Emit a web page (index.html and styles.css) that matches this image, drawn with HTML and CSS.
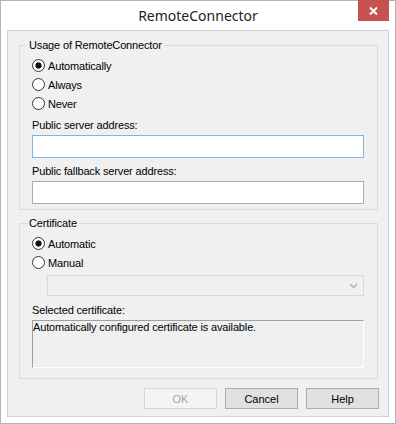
FILE: index.html
```html
<!DOCTYPE html>
<html lang="en">
<head>
  <meta charset="UTF-8" />
  <title>RemoteConnector</title>
  <link rel="stylesheet" href="styles.css">
</head>
<body>

  <div class="window">
    <div class="titlebar">
      <span></span>
      <div class="title">RemoteConnector</div>
      <button class="close">
        <svg width="9" height="8" viewBox="0 0 9 8"><path d="M1 0.5 L8 7.5 M8 0.5 L1 7.5" stroke="#fff" stroke-width="2" fill="none"/></svg>
      </button>
    </div>

    <div class="client">
      <!-- Usage group -->
      <fieldset class="group">
        <legend>Usage of RemoteConnector</legend>
        <div class="radios">
          <label class="radio"><span class="circle checked"></span>Automatically</label>
          <label class="radio"><span class="circle"></span>Always</label>
          <label class="radio"><span class="circle"></span>Never</label>
        </div>
        <div class="field-label first">Public server address:</div>
        <input class="text-input focused" type="text" />
        <div class="field-label">Public fallback server address:</div>
        <input class="text-input" type="text" />
      </fieldset>

      <!-- Certificate group -->
      <fieldset class="group group-cert">
        <legend>Certificate</legend>
        <div class="radios">
          <label class="radio"><span class="circle checked"></span>Automatic</label>
          <label class="radio"><span class="circle"></span>Manual</label>
        </div>
        <div class="combo">
          <svg width="9" height="6" viewBox="0 0 9 6"><polyline points="1,1 4.5,4.5 8,1" stroke="#b5b5b5" stroke-width="1.6" fill="none"/></svg>
        </div>
        <div class="field-label cert-label">Selected certificate:</div>
        <div class="cert-box">Automatically configured certificate is available.</div>
      </fieldset>

      <div class="buttons">
        <button class="btn" disabled>OK</button>
        <button class="btn">Cancel</button>
        <button class="btn">Help</button>
      </div>
    </div>
  </div>

</body>
</html>
```

FILE: styles.css
```css
body {
  margin: 0;
  background: #fff;
  font-family: "Liberation Sans", Arial, sans-serif;
  font-size: 11px;
  letter-spacing: -0.15px;
  color: #000;
}

/* Window frame */
.window {
  width: 396px;
  height: 424px;
  box-sizing: border-box;
  border: 1px solid #b4b4b4;
  background: #fff;
  padding: 0 6px 6px 6px;
  display: flex;
  flex-direction: column;
}

.titlebar {
  height: 29px;
  flex: none;
  display: grid;
  grid-template-columns: 1fr auto 1fr;
  align-items: start;
}

.title {
  font-family: "Noto Sans", "Open Sans", sans-serif;
  font-size: 14px;
  letter-spacing: 0;
  line-height: 30px;
  color: #222;
}

.close {
  justify-self: end;
  margin-top: -1px;
  width: 31px;
  height: 21px;
  border: none;
  padding: 0;
  background: #c75050;
  display: flex;
  justify-content: center;
  align-items: center;
}

/* Client area */
.client {
  flex: 1;
  border: 1px solid #d2d2d2;
  background: #f0f0f0;
  padding: 8px 10px 7px 11px;
  display: flex;
  flex-direction: column;
}

.group {
  margin: 0;
  min-width: 0;
  border: 1px solid #dcdcdc;
  padding: 0 13px 5px 12px;
}

.group legend {
  margin-left: -5px;
  padding: 0 2px;
  font-size: 11px;
  line-height: 13px;
}

.group-cert {
  margin-top: 7px;
  padding-bottom: 10px;
}

.radios {
  padding-top: 4px;
  display: flex;
  flex-direction: column;
}

.radio {
  height: 19px;
  display: flex;
  align-items: center;
  gap: 3px;
}

.circle {
  width: 13px;
  height: 13px;
  box-sizing: border-box;
  border: 1px solid #333;
  border-radius: 50%;
  background: #fff;
}

.circle.checked {
  background: radial-gradient(circle, #111 0 2.8px, #fff 3.4px);
}

.field-label {
  margin-top: 7px;
  line-height: 13px;
}

.field-label.first { margin-top: 6px; }

.text-input {
  display: block;
  margin: 3px 0 0 0;
  width: 100%;
  height: 23px;
  box-sizing: border-box;
  border: 1px solid #acacac;
  background: #fff;
  outline: none;
  padding: 0 3px;
  font: inherit;
}

.text-input.focused { border-color: #7eb4ea; }

/* Disabled combobox */
.combo {
  margin: 3px 0 0 15px;
  height: 21px;
  box-sizing: border-box;
  border: 1px solid #d9d9d9;
  background: #f0f0f0;
  display: flex;
  justify-content: flex-end;
  align-items: center;
  padding-right: 5px;
}

.cert-label { margin-top: 8px; }

.cert-box {
  margin-top: 3px;
  height: 48px;
  box-sizing: border-box;
  border: 1px solid;
  border-color: #a0a0a0 #fff #fff #a0a0a0;
  line-height: 13px;
  padding: 0;
}

/* Dialog buttons */
.buttons {
  margin: 9px -1px 0 0;
  display: flex;
  justify-content: flex-end;
  gap: 8px;
}

.btn {
  width: 73px;
  height: 21px;
  border: 1px solid #adadad;
  background: #e1e1e1;
  font: inherit;
  color: #000;
  padding: 0;
}

.btn:disabled {
  border-color: #d5d5d5;
  background: #f4f4f4;
  color: #a5a5a5;
}
```
